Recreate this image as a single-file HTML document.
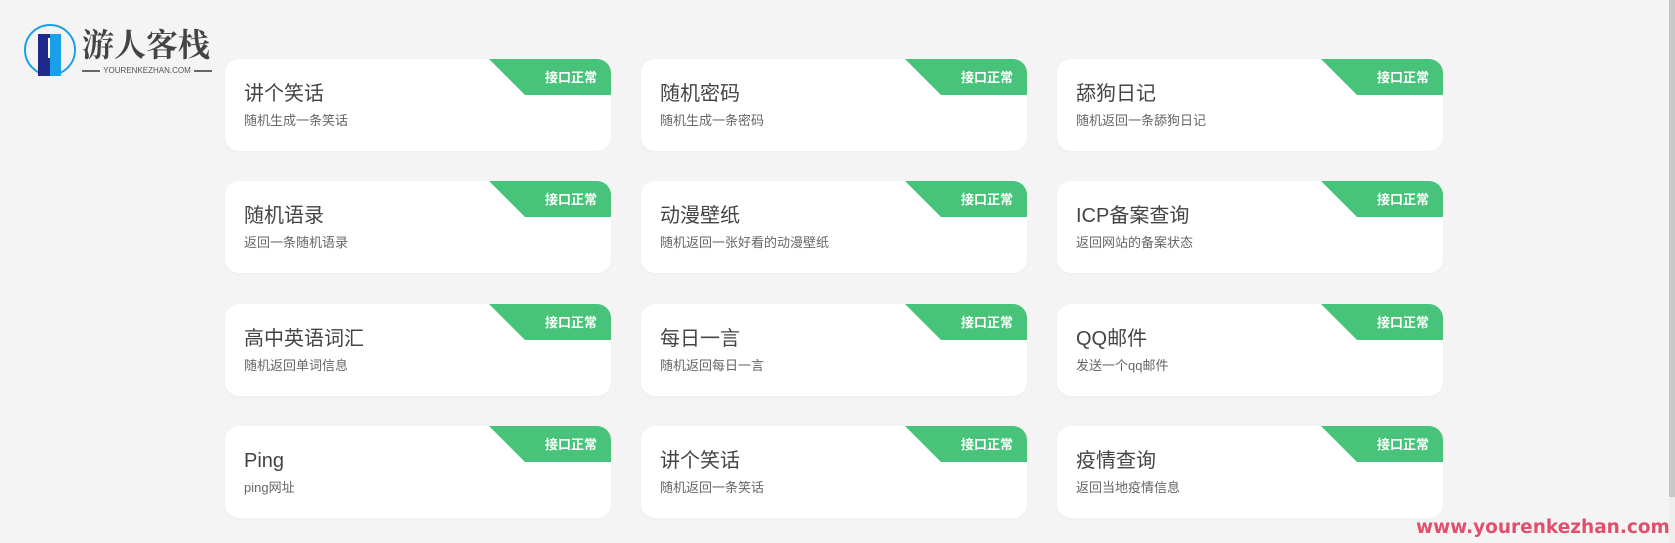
<!DOCTYPE html>
<html><head><meta charset="utf-8"><style>
body{margin:0;width:1675px;height:543px;background:#f4f4f4;position:relative;overflow:hidden;font-family:"Liberation Sans","Noto Sans CJK SC",sans-serif}
.card{position:absolute;width:386px;height:92px;background:#fff;border-radius:14px;overflow:hidden;box-shadow:0 1px 3px rgba(0,0,0,.03)}
.card .t{position:absolute;left:19px;top:23px;font-size:20px;line-height:24px;height:24px;color:#444}
.card .s{position:absolute;left:19px;top:54px;font-size:13px;line-height:16px;color:#666}
.card .b{position:absolute;right:0;top:0;width:122px;height:36px;background:#47c479;clip-path:polygon(0 0,100% 0,100% 100%,36px 100%)}
.card .b span{position:absolute;right:14px;top:11px;line-height:16px;color:#fff;font-size:13px;font-weight:bold}
.logo{position:absolute;left:24px;top:24px}
.wm{position:absolute;left:1416px;top:517px;font-size:18.5px;line-height:22px;font-weight:bold;color:#e0506e;font-family:"DejaVu Sans",sans-serif;white-space:nowrap}
.sb{position:absolute;left:1669px;top:0;width:6px;height:543px;background:#eee}
.sb div{width:6px;height:497px;background:#c8c8c8}
</style></head><body>
<div class="logo">
<svg width="54" height="54" viewBox="0 0 54 54"><circle cx="26" cy="26" r="25" fill="none" stroke="#1aa0e8" stroke-width="2"/>
<rect x="14" y="10" width="12" height="42" fill="#1f2a8a"/><rect x="26" y="10" width="11" height="42" fill="#1aa0e8"/><rect x="24" y="14" width="2" height="20" fill="#fff"/></svg>
</div>
<div style="position:absolute;left:82px;top:23px;font-size:32px;line-height:40px;font-weight:bold;color:#444;font-family:'Noto Serif CJK SC',serif">游人客栈</div>
<div style="position:absolute;left:82px;top:66px;width:130px;font-size:8px;line-height:10px;color:#555;display:flex;align-items:center;gap:3px"><span style="flex:1;height:1.5px;background:#666"></span>YOURENKEZHAN.COM<span style="flex:1;height:1.5px;background:#666"></span></div>

<div class="card" style="left:225px;top:59px"><div class="b"><span>接口正常</span></div><div class="t">讲个笑话</div><div class="s">随机生成一条笑话</div></div>
<div class="card" style="left:641px;top:59px"><div class="b"><span>接口正常</span></div><div class="t">随机密码</div><div class="s">随机生成一条密码</div></div>
<div class="card" style="left:1057px;top:59px"><div class="b"><span>接口正常</span></div><div class="t">舔狗日记</div><div class="s">随机返回一条舔狗日记</div></div>

<div class="card" style="left:225px;top:181px"><div class="b"><span>接口正常</span></div><div class="t">随机语录</div><div class="s">返回一条随机语录</div></div>
<div class="card" style="left:641px;top:181px"><div class="b"><span>接口正常</span></div><div class="t">动漫壁纸</div><div class="s">随机返回一张好看的动漫壁纸</div></div>
<div class="card" style="left:1057px;top:181px"><div class="b"><span>接口正常</span></div><div class="t">ICP备案查询</div><div class="s">返回网站的备案状态</div></div>

<div class="card" style="left:225px;top:304px"><div class="b"><span>接口正常</span></div><div class="t">高中英语词汇</div><div class="s">随机返回单词信息</div></div>
<div class="card" style="left:641px;top:304px"><div class="b"><span>接口正常</span></div><div class="t">每日一言</div><div class="s">随机返回每日一言</div></div>
<div class="card" style="left:1057px;top:304px"><div class="b"><span>接口正常</span></div><div class="t">QQ邮件</div><div class="s">发送一个qq邮件</div></div>

<div class="card" style="left:225px;top:426px"><div class="b"><span>接口正常</span></div><div class="t">Ping</div><div class="s">ping网址</div></div>
<div class="card" style="left:641px;top:426px"><div class="b"><span>接口正常</span></div><div class="t">讲个笑话</div><div class="s">随机返回一条笑话</div></div>
<div class="card" style="left:1057px;top:426px"><div class="b"><span>接口正常</span></div><div class="t">疫情查询</div><div class="s">返回当地疫情信息</div></div>

<div class="wm">www.yourenkezhan.com</div>
<div class="sb"><div></div></div>
</body></html>
